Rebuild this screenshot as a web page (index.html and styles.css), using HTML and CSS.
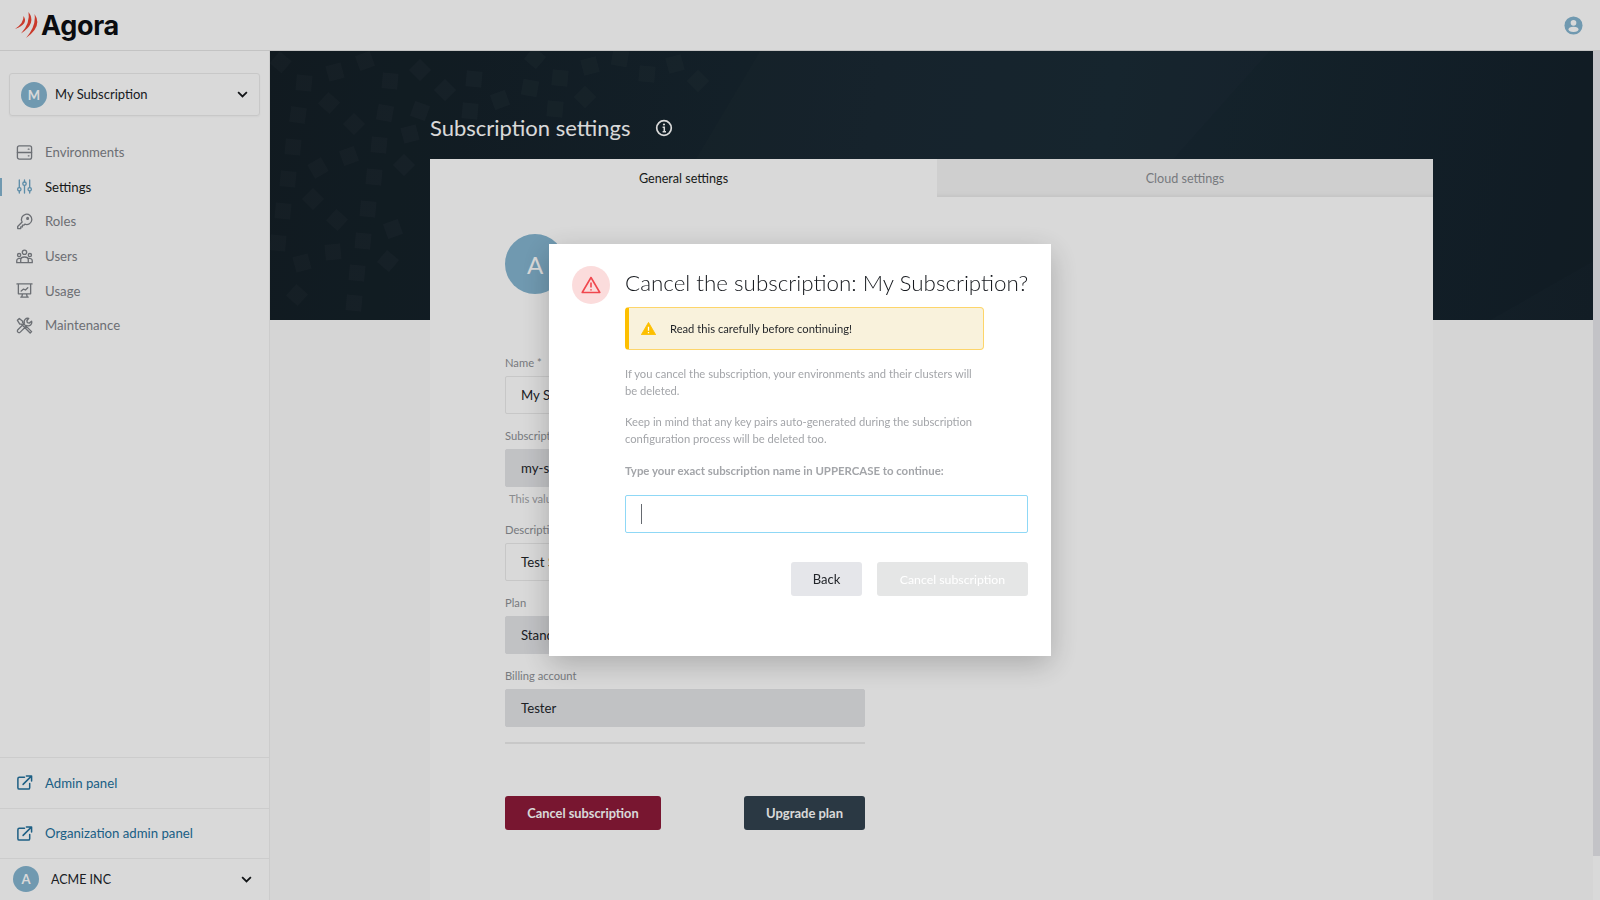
FILE: index.html
```html
<!DOCTYPE html>
<html lang="en">
<head>
<meta charset="utf-8">
<title>Agora - Subscription settings</title>
<link rel="stylesheet" href="styles.css">
</head>
<body>
<header class="topbar">
  <div class="logo">
    <svg class="logo-mark" viewBox="0 0 26 28" width="26" height="28"><g fill="#ee4433">
      <path d="M19.500 3Q28 15 11 27Q21.500 15 19.500 3Z"/>
      <path d="M13.500 1Q22 12 6 22.500Q15.500 12 13.500 1Z"/>
      <path d="M8.500 5Q14 13 0 18Q9 12 8.500 5Z"/>
    </g></svg>
    <span class="logo-text">Agora</span>
  </div>
  <svg class="profile" viewBox="0 0 20 20" width="19" height="19"><circle cx="10" cy="10" r="9.5" fill="#84b4cf"/><circle cx="10" cy="7.2" r="3" fill="#fff"/><ellipse cx="10" cy="14" rx="5.2" ry="2.8" fill="#fff"/></svg>
</header>
<div class="shell">
  <aside class="sidebar">
    <div class="sub-select">
      <span class="avatar">M</span>
      <span class="sub-name">My Subscription</span>
      <svg class="chev" viewBox="0 0 12 8" width="11" height="7"><path d="M1 1.2l5 5 5-5" fill="none" stroke="#15181b" stroke-width="2"/></svg>
    </div>
    <nav class="nav">
      <a class="nav-item"><svg class="ico" viewBox="0 0 18 18"><rect x="1.5" y="2" width="15" height="14" rx="2"/><path d="M1.5 9h15M13 5.5h.8M13 12.5h.8"/></svg>Environments</a>
      <a class="nav-item active"><svg class="ico" viewBox="0 0 18 18"><path d="M3.5 2v8M3.5 14v2M9 2v2M9 8v8M14.500 2v8M14.500 14v2"/><circle cx="3.500" cy="12" r="1.800"/><circle cx="9" cy="6" r="1.800"/><circle cx="14.500" cy="12" r="1.800"/></svg>Settings</a>
      <a class="nav-item"><svg class="ico" viewBox="0 0 18 18"><path d="M6.500 9.500 1.800 14.200V16.500H5v-1.800h1.800v-1.800h1.500l1-1a5.500 5.500 0 1 0-2.800-2.400z"/><circle cx="12.300" cy="5.700" r=".9"/></svg>Roles</a>
      <a class="nav-item"><svg class="ico" viewBox="0 0 18 18"><circle cx="9" cy="4.500" r="2.300"/><circle cx="3.300" cy="7.500" r="1.700"/><circle cx="14.700" cy="7.500" r="1.700"/><path d="M5 15.500v-3c0-4 8-4 8 0v3zM.8 15.500v-2c0-2 2-2.800 4.200-2.400M17.200 15.500v-2c0-2-2-2.800-4.200-2.400M.8 15.500h16.400"/></svg>Users</a>
      <a class="nav-item"><svg class="ico" viewBox="0 0 18 18"><path d="M1 2h16M2.500 2v10.500h13V2M6 16l1-3.500M12 16l-1-3.500M5 16h8M5.500 9.500l2.500-2 2 1 2.500-2.500"/></svg>Usage</a>
      <a class="nav-item"><svg class="ico" viewBox="0 0 18 18"><path d="M1.500 3.500l2-2 3.500 3v1.500l9.500 9.500-1.500 1.500-9.500-9.500H4zM16.500 4.500a3.700 3.700 0 0 1-5 4.500l-7 7a1.600 1.600 0 0 1-2.500-2.500l7-7a3.700 3.700 0 0 1 4.500-5L11.500 4l.5 2 2 .5z"/></svg>Maintenance</a>
    </nav>
    <div class="side-foot">
      <a class="ext-link"><svg class="ico ext" viewBox="0 0 18 18"><path d="M9 3.500H3.500a1.500 1.500 0 0 0-1.500 1.500v9.500A1.500 1.500 0 0 0 3.500 16H13a1.500 1.500 0 0 0 1.500-1.500V10M7.500 11 16 2.500M11 2h5.500v5.500"/></svg>Admin panel</a>
      <a class="ext-link"><svg class="ico ext" viewBox="0 0 18 18"><path d="M9 3.500H3.500a1.500 1.500 0 0 0-1.500 1.500v9.500A1.500 1.500 0 0 0 3.500 16H13a1.500 1.500 0 0 0 1.500-1.500V10M7.500 11 16 2.500M11 2h5.500v5.500"/></svg>Organization admin panel</a>
      <div class="org">
        <span class="avatar">A</span>
        <span class="org-name">ACME INC</span>
        <svg class="chev" viewBox="0 0 12 8" width="11" height="7"><path d="M1 1.200l5 5 5-5" fill="none" stroke="#15181b" stroke-width="2"/></svg>
      </div>
    </div>
  </aside>
  <main class="content">
    <section class="hero">
      <svg class="hero-art" viewBox="0 0 1323 269" preserveAspectRatio="none" aria-hidden="true">
        <path class="sweep" d="M490 0H1000L760 269H330Z"/>
        <path class="sweep2" d="M1323 210V269H1220Z"/>
        <g class="squares">
          <rect x="-8" y="-9" width="16" height="16" transform="translate(10 12) rotate(40)"/>
          <rect x="-8" y="-8" width="16" height="16" transform="translate(65 21) rotate(-15)"/>
          <rect x="-8" y="-8" width="16" height="16" transform="translate(34 32) rotate(5)"/>
          <rect x="-8" y="-8" width="16" height="16" transform="translate(120 30) rotate(5)"/>
          <rect x="-8" y="-8" width="16" height="16" transform="translate(150 19) rotate(45)"/>
          <rect x="-8" y="-8" width="16" height="16" transform="translate(95 10) rotate(-20)"/>
          <rect x="-8" y="-8" width="16" height="16" transform="translate(59 52) rotate(42)"/>
          <rect x="-8" y="-8" width="16" height="16" transform="translate(28 64) rotate(8)"/>
          <rect x="-8" y="-8" width="16" height="16" transform="translate(115 62) rotate(10)"/>
          <rect x="-8" y="-8" width="16" height="16" transform="translate(84 73) rotate(45)"/>
          <rect x="-8" y="-8" width="16" height="16" transform="translate(23 96) rotate(5)"/>
          <rect x="-8" y="-8" width="16" height="16" transform="translate(79 105) rotate(-20)"/>
          <rect x="-8" y="-8" width="16" height="16" transform="translate(48 117) rotate(-30)"/>
          <rect x="-8" y="-8" width="16" height="16" transform="translate(109 94) rotate(5)"/>
          <rect x="-8" y="-8" width="16" height="16" transform="translate(134 114) rotate(45)"/>
          <rect x="-8" y="-8" width="16" height="16" transform="translate(140 83) rotate(-15)"/>
          <rect x="-8" y="-8" width="16" height="16" transform="translate(18 128) rotate(5)"/>
          <rect x="-8" y="-8" width="16" height="16" transform="translate(104 126) rotate(5)"/>
          <rect x="-8" y="-8" width="16" height="16" transform="translate(43 148) rotate(45)"/>
          <rect x="-8" y="-8" width="16" height="16" transform="translate(13 160) rotate(5)"/>
          <rect x="-8" y="-8" width="16" height="16" transform="translate(98 158) rotate(5)"/>
          <rect x="-8" y="-8" width="16" height="16" transform="translate(67 169) rotate(42)"/>
          <rect x="-8" y="-8" width="16" height="16" transform="translate(123 178) rotate(-20)"/>
          <rect x="-8" y="-8" width="16" height="16" transform="translate(8 192) rotate(5)"/>
          <rect x="-8" y="-8" width="16" height="16" transform="translate(93 190) rotate(5)"/>
          <rect x="-8" y="-8" width="16" height="16" transform="translate(63 201) rotate(-5)"/>
          <rect x="-8" y="-8" width="16" height="16" transform="translate(32 212) rotate(-15)"/>
          <rect x="-8" y="-8" width="16" height="16" transform="translate(118 210) rotate(40)"/>
          <rect x="-8" y="-8" width="16" height="16" transform="translate(87 222) rotate(5)"/>
          <rect x="-8" y="-8" width="16" height="16" transform="translate(27 244) rotate(42)"/>
          <rect x="-8" y="-8" width="16" height="16" transform="translate(84 252) rotate(5)"/>
          <rect x="-8" y="-8" width="16" height="16" transform="translate(175 39) rotate(45)"/>
          <rect x="-8" y="-8" width="16" height="16" transform="translate(204 28) rotate(5)"/>
          <rect x="-8" y="-8" width="16" height="16" transform="translate(230 49) rotate(-20)"/>
          <rect x="-8" y="-8" width="16" height="16" transform="translate(260 37) rotate(10)"/>
          <rect x="-8" y="-8" width="16" height="16" transform="translate(290 27) rotate(5)"/>
          <rect x="-8" y="-8" width="16" height="16" transform="translate(315 46) rotate(45)"/>
          <rect x="-8" y="-8" width="16" height="16" transform="translate(285 58) rotate(5)"/>
          <rect x="-8" y="-8" width="16" height="16" transform="translate(200 60) rotate(5)"/>
          <rect x="-8" y="-8" width="16" height="16" transform="translate(320 15) rotate(-15)"/>
          <rect x="-8" y="-8" width="16" height="16" transform="translate(265 7) rotate(40)"/>
          <rect x="-8" y="-8" width="16" height="16" transform="translate(350 7) rotate(10)"/>
          <rect x="-8" y="-8" width="16" height="16" transform="translate(377 23) rotate(5)"/>
          <rect x="-8" y="-8" width="16" height="16" transform="translate(405 13) rotate(-15)"/>
          <rect x="-8" y="-8" width="16" height="16" transform="translate(428 30) rotate(45)"/>
          <rect x="-8" y="-8" width="16" height="16" transform="translate(150 60) rotate(20)"/>
        </g>
      </svg>
      <div class="hero-title">
        <h1>Subscription settings</h1>
        <svg class="info" viewBox="0 0 18 18" width="18" height="18"><circle cx="9" cy="9" r="7.300" fill="none" stroke="#fff" stroke-width="1.700"/><circle cx="9" cy="5.500" r="1.100" fill="#fff"/><path d="M7.600 8.200H9.300V12.500M7.600 12.700H11" fill="none" stroke="#fff" stroke-width="1.500"/></svg>
      </div>
    </section>
    <section class="card">
      <div class="tabs">
        <div class="tab selected">General settings</div>
        <div class="tab">Cloud settings</div>
      </div>
      <div class="card-body">
        <div class="big-avatar">A</div>
        <form class="form">
          <div class="field"><label>Name *</label><div class="input">My Subscription</div></div>
          <div class="field"><label>Subscription ID</label><div class="input disabled">my-subscription</div><p class="hint">This value cannot be changed</p></div>
          <div class="field"><label>Description</label><div class="input">Test Subscription</div></div>
          <div class="field"><label>Plan</label><div class="input disabled">Standard</div></div>
          <div class="field"><label>Billing account</label><div class="input disabled">Tester</div></div>
          <div class="actions">
            <button type="button" class="btn danger">Cancel subscription</button>
            <button type="button" class="btn dark">Upgrade plan</button>
          </div>
        </form>
      </div>
    </section>
  </main>
  <div class="scroll-thumb"></div>
</div>
<div class="overlay">
  <div class="modal" role="dialog">
    <div class="modal-icon">
      <svg viewBox="0 0 20 18" width="20" height="18"><path d="M10 1.500 1.200 16.500h17.600z" fill="none" stroke="#f0474e" stroke-width="1.600" stroke-linejoin="round"/><path d="M10 6.500v5M10 13.200v1.300" stroke="#f0474e" stroke-width="1.600"/></svg>
    </div>
    <div class="modal-main">
      <h2>Cancel the subscription: My Subscription?</h2>
      <div class="alert">
        <svg viewBox="0 0 16 14" width="15" height="13"><path d="M8 .5 15.700 13.700H.3z" fill="#fdbf00" stroke="#fdbf00" stroke-linejoin="round"/><path d="M8 5v4.300M8 10.700v1.500" stroke="#fff" stroke-width="1.400"/></svg>
        <span>Read this carefully before continuing!</span>
      </div>
      <p class="copy">If you cancel the subscription, your environments and their clusters will be deleted.</p>
      <p class="copy">Keep in mind that any key pairs auto-generated during the subscription configuration process will be deleted too.</p>
      <p class="copy strong">Type your exact subscription name in UPPERCASE to continue:</p>
      <div class="confirm-input"><span class="caret"></span></div>
      <div class="modal-actions">
        <button type="button" class="btn back">Back</button>
        <button type="button" class="btn off">Cancel subscription</button>
      </div>
    </div>
  </div>
</div>
</body>
</html>
```
FILE: styles.css
```css
* { box-sizing: border-box; }
html, body { margin: 0; height: 900px; overflow: hidden; }
body { font-family: "Lato", "Liberation Sans", sans-serif; color: #22252a; background: #fff; }

.topbar { height: 51px; display: flex; align-items: center; justify-content: space-between; padding: 0 17px 0 15px; border-bottom: 1px solid #e6e6e6; }
.logo { display: flex; align-items: center; }
.logo-mark { width: 26px; height: 28px; margin-top: -1px; }
.logo-text { font-family: "Inter", sans-serif; font-weight: 700; font-size: 27px; letter-spacing: -.3px; color: #0d0f12; margin-left: 0; }
.profile { display: block; }

.shell { display: flex; height: 849px; position: relative; }
.sidebar { width: 270px; flex: none; display: flex; flex-direction: column; border-right: 1px solid #f0f0f0; padding-top: 22px; }
.sub-select { margin: 0 9px; height: 43px; border: 1px solid #ececec; border-radius: 3px; display: flex; align-items: center; padding: 0 11px; box-shadow: 0 1px 2px rgba(0,0,0,.04); }
.avatar { width: 26px; height: 26px; border-radius: 50%; background: #84b4cf; color: #fff; font-size: 13px; font-weight: 700; display: flex; align-items: center; justify-content: center; flex: none; }
.sub-name { margin-left: 8px; font-size: 13px; flex: 1; padding-bottom: 2px; }
.chev { flex: none; }

.nav { margin-top: 19px; display: flex; flex-direction: column; }
.nav-item { height: 34.6px; display: flex; align-items: center; padding-left: 16px; font-size: 13.2px; color: #7f8389; position: relative; }
.nav-item.active { color: #1b1e22; }
.nav-item.active::before { content: ""; position: absolute; left: 0; top: 8px; width: 2px; height: 18px; background: #84b4cf; }
.ico { width: 17px; height: 17px; margin-right: 12px; flex: none; fill: none; stroke: #7f8389; stroke-width: 1.4; stroke-linejoin: round; stroke-linecap: round; }
.active .ico { stroke: #6ea6c6; }

.side-foot { margin-top: auto; }
.ext-link { height: 50.500px; display: flex; align-items: center; padding-left: 16px; font-size: 13.2px; color: #23709c; border-top: 1px solid #f0f0f0; }
.ico.ext { stroke: #23709c; stroke-width: 1.600; }
.org { height: 42px; border-top: 1px solid #f0f0f0; display: flex; align-items: center; padding: 0 17px 1px 13px; }
.org-name { margin-left: 12px; font-size: 12.500px; flex: 1; }

.content { flex: 1; min-width: 0; margin-right: 7px; background: #fbfbfb; }
.hero { height: 269px; position: relative; background: linear-gradient(100deg, #141f26 0%, #182832 45%, #192a35 62%, #14212a 100%); padding: 54px 0 0 160px; overflow: hidden; }
.hero-art { position: absolute; inset: 0; width: 100%; height: 100%; }
.sweep { fill: rgba(255,255,255,.012); }
.sweep2 { fill: rgba(255,255,255,.012); }
.squares rect { fill: rgba(255,255,255,.022); }
.hero-title { position: relative; display: flex; align-items: center; height: 44px; }
.hero-title h1 { margin: 0; font-size: 22px; font-weight: 400; color: #fff; }
.info { margin: 2px 0 0 24px; }

.card { margin: -161px 160px 0; background: #fff; position: relative; min-height: 741px; }
.tabs { display: flex; height: 38px; }
.tab { flex: 1; display: flex; align-items: center; justify-content: center; font-size: 12.600px; color: #8d9095; background: #f4f4f4; box-shadow: inset 0 -6px 6px -6px rgba(0,0,0,.1); }
.tab.selected { flex: 0 0 507px; background: #fff; color: #1b1e22; box-shadow: none; }
.card-body { padding: 37px 0 0 75px; }
.big-avatar { width: 60px; height: 60px; border-radius: 50%; background: #84b4cf; color: #fff; font-size: 24px; display: flex; align-items: center; justify-content: center; }
.form { width: 360px; margin-top: 60px; }
.field { margin-bottom: 13px; }
.field label { display: block; height: 18px; line-height: 18px; font-size: 11.200px; color: #8d9095; margin-bottom: 4px; }
.input { height: 38px; line-height: 36px; padding: 0 15px; font-size: 13.200px; border: 1px solid #eaeaea; border-radius: 2px; color: #22252a; background: #fff; }
.input.disabled { background: #e3e4e7; border-color: #e3e4e7; }
.hint { margin: 3px 0 0 4px; height: 18px; line-height: 18px; font-size: 11.200px; color: #a3a5a9; }
.actions { display: flex; justify-content: space-between; border-top: 2px solid #ececec; margin-top: 15px; padding-top: 52px; }

.btn { height: 34px; border: 0; border-radius: 3px; font-family: inherit; font-size: 13px; padding: 0; }
.danger { width: 156px; background: #8e1a39; color: #fff; font-weight: 700; font-size: 12.800px; }
.dark { width: 121px; background: #32424f; color: #fff; font-weight: 700; }

.scroll-thumb { position: absolute; right: 0; top: 0; width: 7px; height: 805px; background: #e5e6ea; }

.overlay { position: fixed; inset: 0; background: rgba(0,0,0,.15); display: flex; align-items: center; justify-content: center; }
.modal { width: 502px; height: 412px; background: #fff; display: flex; padding: 22px 23px 0; box-shadow: 0 8px 28px rgba(0,0,0,.22); }
.modal-icon { width: 38px; height: 38px; border-radius: 50%; background: #fbdcdc; display: flex; align-items: center; justify-content: center; flex: none; }
.modal-main { margin-left: 15px; flex: 1; min-width: 0; }
.modal-main h2 { margin: 0; height: 41px; line-height: 33px; font-size: 22.400px; font-weight: 300; color: #15181d; white-space: nowrap; }
.alert { width: 359px; height: 43px; display: flex; align-items: center; padding-left: 12px; background: #f9f2dc; border: 1px solid #fdd56a; border-left: 4px solid #fdbf00; border-radius: 4px; font-size: 11.200px; color: #1f2226; }
.alert span { margin-left: 14px; }
.copy { width: 360px; margin: 0 0 14px; font-size: 11.200px; line-height: 17px; color: #a3a5a9; }
.alert + .copy { margin-top: 15px; }
.copy + .copy { margin-bottom: 15px; }
.copy.strong { width: auto; font-weight: 700; font-size: 11.400px; color: #a3a5a9; margin-bottom: 0; }
.confirm-input { height: 38px; margin-top: 16px; border: 1px solid #8fd8f6; border-radius: 2px; display: flex; align-items: center; padding-left: 15px; }
.caret { width: 1px; height: 20px; background: #666a70; }
.modal-actions { display: flex; justify-content: flex-end; gap: 15px; margin-top: 29px; }
.back { width: 71px; background: #e5e6ea; color: #22252a; }
.off { width: 151px; background: #e5e6e6; color: #fff; font-size: 12.300px; }
```
